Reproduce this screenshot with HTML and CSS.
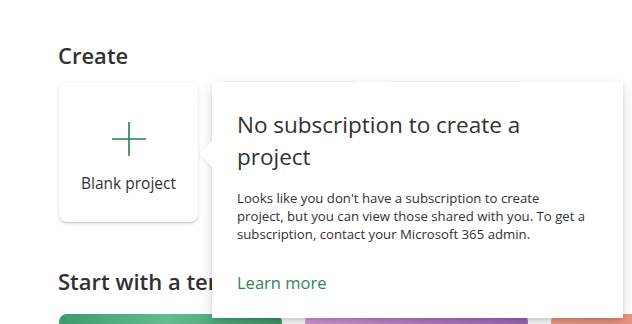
FILE: index.html
```html
<!DOCTYPE html>
<html lang="en">
<head>
  <meta charset="UTF-8">
  <title>Project home</title>
  <link rel="stylesheet" href="styles.css">
</head>
<body>
  <div class="page">
    <h2 class="section-title">Create</h2>
    <div class="create-row">
      <div class="create-card">
        <svg class="plus" width="34" height="34" viewBox="0 0 34 34">
          <path d="M17 0V34M0 17H34" stroke="#25834f" stroke-width="1.6" fill="none"/>
        </svg>
        <span class="card-label">Blank project</span>
      </div>
      <div class="create-card"></div>
      <div class="create-card"></div>
    </div>

    <h2 class="section-title template-title">Start with a template</h2>
    <div class="template-row">
      <div class="template-tile green"></div>
      <div class="template-tile purple"></div>
      <div class="template-tile orange"></div>
    </div>

    <div class="callout">
      <div class="beak"></div>
      <div class="callout-body">
        <h3 class="callout-title">No subscription to create a project</h3>
        <p class="callout-text">Looks like you don't have a subscription to create<br>project, but you can view those shared with you. To get a<br>subscription, contact your Microsoft 365 admin.</p>
        <a class="callout-link" href="#">Learn more</a>
      </div>
    </div>
  </div>
</body>
</html>
```

FILE: styles.css
```css
body {
  margin: 0;
  background-color: white;
  color: #323130;
  font-family: "Open Sans", "Noto Sans", sans-serif;
  overflow: hidden;
}

.page {
  position: relative;
  padding: 41px 0 0 58px;
  height: 324px;
  box-sizing: border-box;
  overflow: hidden;
}

.section-title {
  margin: 0;
  font-size: 22px;
  line-height: 28px;
  font-weight: 600;
  color: #323130;
  white-space: nowrap;
}

.create-row {
  display: flex;
  gap: 24px;
  margin-top: 13px;
  padding-left: 1px;
}

.create-card {
  width: 139px;
  height: 140px;
  flex-shrink: 0;
  background-color: white;
  border-radius: 8px;
  box-shadow: 0 1.6px 3.6px rgba(0, 0, 0, 0.13), 0 0.3px 0.9px rgba(0, 0, 0, 0.11);
  display: flex;
  flex-direction: column;
  align-items: center;
}

.plus {
  margin-top: 40px;
}

.card-label {
  margin-top: 16px;
  font-size: 15.5px;
  line-height: 22px;
  color: #323130;
}

.template-title {
  margin-top: 45px;
}

.template-row {
  display: flex;
  gap: 23px;
  margin-top: 19px;
  padding-left: 1px;
}

.template-tile {
  width: 223px;
  height: 120px;
  flex-shrink: 0;
  border-radius: 8px 8px 0 0;
}

.green {
  background: linear-gradient(100deg, #3e9a6c 0%, #62bc8e 45%, #3f8f63 100%);
}

.purple {
  background: linear-gradient(100deg, #d59bd8 0%, #b47fc4 50%, #9867b2 100%);
}

.orange {
  background: linear-gradient(100deg, #ea9c86 0%, #e4877a 100%);
}

/* teaching callout lying over the page */
.callout {
  position: absolute;
  left: 212px;
  top: 82px;
  width: 411px;
  background-color: white;
  border-radius: 2px;
  box-shadow: 0 6.4px 14.4px rgba(0, 0, 0, 0.132), 0 1.2px 3.6px rgba(0, 0, 0, 0.108);
}

.beak {
  position: absolute;
  left: -9px;
  top: 63px;
  width: 18px;
  height: 18px;
  background-color: white;
  transform: rotate(45deg);
  box-shadow: 0 1.2px 3.6px rgba(0, 0, 0, 0.06);
}

.callout-body {
  position: relative;
  background-color: white;
  padding: 27px 24px 24px 25px;
}

.callout-title {
  margin: 0;
  font-size: 22.5px;
  line-height: 32px;
  font-weight: 400;
  color: #323130;
  padding-right: 60px;
}

.callout-text {
  margin: 16px 0 0;
  font-size: 13.2px;
  line-height: 18px;
  color: #323130;
}

.callout-link {
  display: block;
  margin-top: 29px;
  font-size: 16.5px;
  line-height: 22px;
  color: #2f8553;
  text-decoration: none;
}
```
